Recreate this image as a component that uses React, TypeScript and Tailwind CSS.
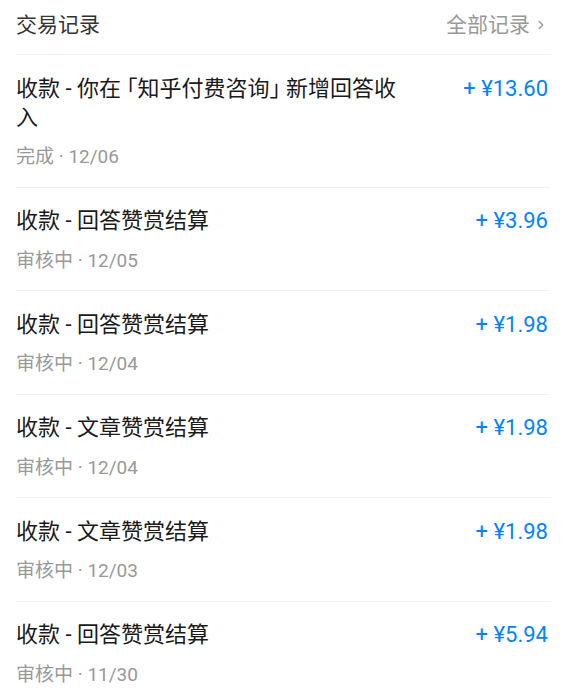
import { ChevronRight } from "lucide-react";

type Record = {
  title: string;
  status: string;
  date: string;
  amount: string;
};

const records: Record[] = [
  { title: "收款 - 你在 ｢知乎付费咨询｣ 新增回答收入", status: "完成", date: "12/06", amount: "13.60" },
  { title: "收款 - 回答赞赏结算", status: "审核中", date: "12/05", amount: "3.96" },
  { title: "收款 - 回答赞赏结算", status: "审核中", date: "12/04", amount: "1.98" },
  { title: "收款 - 文章赞赏结算", status: "审核中", date: "12/04", amount: "1.98" },
  { title: "收款 - 文章赞赏结算", status: "审核中", date: "12/03", amount: "1.98" },
  { title: "收款 - 回答赞赏结算", status: "审核中", date: "11/30", amount: "5.94" },
];

export default function App() {
  return (
    <div
      className="w-[566px] h-[696px] overflow-hidden bg-white"
      style={{ fontFamily: "Roboto, 'Noto Sans CJK SC', sans-serif" }}
    >
      {/* 头部 */}
      <div className="ml-4 mr-4 h-[55px] flex items-center justify-between border-b border-[#f2f2f2]">
        <div className="text-[21px] text-[#333] leading-none pb-[4px]">交易记录</div>
        <div className="flex items-center text-[21px] text-[#999] leading-none pb-[4px] mr-[2px]">
          全部记录
          <ChevronRight size={14} strokeWidth={2.4} className="ml-[4px] text-[#999]" />
        </div>
      </div>

      {/* 列表 */}
      <div className="ml-4 mr-4">
        {records.map((r, i) => (
          <div
            key={i}
            className="flex items-start justify-between pt-[18.5px] pb-[17.5px] border-b border-[#f2f2f2]"
          >
            <div className="flex-1 min-w-0 pr-[52px]">
              <div className="text-[22px] leading-[29px] text-[#1a1a1a]">{r.title}</div>
              <div className="mt-[13.5px] text-[19px] leading-[24px] text-[#999]">
                {r.status} · {r.date}
              </div>
            </div>
            <div className="text-[22px] leading-[29px] text-[#0084ff] whitespace-nowrap mr-[2px]">
              + ¥{r.amount}
            </div>
          </div>
        ))}
      </div>
    </div>
  );
}
